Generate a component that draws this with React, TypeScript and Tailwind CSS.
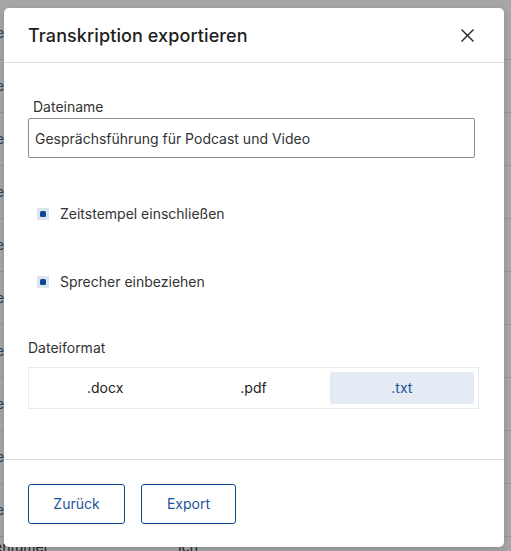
import { useState } from 'react';

const rows = Array.from({ length: 10 });

function CheckBox({ checked, label, onToggle }: { checked: boolean; label: string; onToggle: () => void }) {
  return (
    <button type="button" onClick={onToggle} className="flex items-center gap-[11px] pl-[9px] h-5 text-left">
      <span className="w-3 h-3 bg-[#dde6f0] flex items-center justify-center">
        {checked && <span className="w-[6px] h-[6px] rounded-[1.5px] bg-[#0b4a8f]" />}
      </span>
      <span className="text-sm text-[#333]">{label}</span>
    </button>
  );
}

export default function App() {
  const [ts, setTs] = useState(true);
  const [sp, setSp] = useState(true);
  const [fmt, setFmt] = useState('.txt');
  const [name, setName] = useState('Gesprächsführung für Podcast und Video');

  return (
    <div className="relative w-[511px] h-[551px] overflow-hidden bg-[#a6a6a6]" style={{ fontFamily: 'Inter, "Open Sans", sans-serif' }}>
      {/* page behind the overlay */}
      <div className="pt-[7px]">
        {rows.map((_, i) => (
          <div key={i} className="h-[53px] flex items-center border-b border-[#949494] text-sm text-[#2c4460] -ml-[4px]">
            e
          </div>
        ))}
      </div>
      <div className="absolute left-0 top-[537px] flex text-sm text-[#222] -ml-[6px]">
        <span className="w-[184px]">entümer</span>
        <span>Ich</span>
      </div>

      {/* dialog */}
      <div className="absolute left-[4px] top-[8px] w-[500px] h-[539px] bg-white rounded-[5px] flex flex-col shadow-[0_2px_6px_rgba(0,0,0,0.15)]">
        <div className="h-[55px] shrink-0 flex items-center justify-between pl-6 pr-[29px] border-b border-[#dcdcdc]">
          <h2 className="text-[18px] font-medium text-[#1e1e1e] tracking-[0.1px]">Transkription exportieren</h2>
          <button type="button" className="text-[#222]">
            <svg width="15" height="15" viewBox="0 0 15 15" fill="none" stroke="currentColor" strokeWidth={1.4}>
              <path d="M1.5 1.5l12 12M13.5 1.5l-12 12" />
            </svg>
          </button>
        </div>

        <div className="flex-1 px-6 pt-[34px] flex flex-col">
          <label className="text-sm text-[#333] leading-5 pl-[5px]">Dateiname</label>
          <input
            value={name}
            onChange={e => setName(e.target.value)}
            className="mt-px h-[40px] w-[447px] border border-[#8c8c8c] rounded-[2px] px-[6px] text-sm text-[#333] outline-none"
          />

          <div className="mt-[46px]">
            <CheckBox checked={ts} label="Zeitstempel einschließen" onToggle={() => setTs(v => !v)} />
          </div>
          <div className="mt-[48px]">
            <CheckBox checked={sp} label="Sprecher einbeziehen" onToggle={() => setSp(v => !v)} />
          </div>

          <label className="mt-[46px] text-sm text-[#333] leading-5">Dateiformat</label>
          <div className="mt-[9px] h-[42px] w-[451px] border border-[#e4ecf5] p-[4px] grid grid-cols-3 gap-1">
            {['.docx', '.pdf', '.txt'].map(f => (
              <button
                key={f}
                type="button"
                onClick={() => setFmt(f)}
                className={`text-sm rounded-[2px] ${fmt === f ? 'bg-[#e4ebf4] text-[#1c5597]' : 'text-[#222]'}`}
              >
                {f}
              </button>
            ))}
          </div>
        </div>

        <div className="h-[88px] shrink-0 border-t border-[#dcdcdc] px-6 pt-6 flex gap-4">
          <button type="button" className="h-[40px] w-[97px] border border-[#0b4a8f] rounded-[3px] text-sm text-[#1c5597]">
            Zurück
          </button>
          <button type="button" className="h-[40px] w-[95px] border border-[#0b4a8f] rounded-[3px] text-sm text-[#1c5597]">
            Export
          </button>
        </div>
      </div>
    </div>
  );
}
